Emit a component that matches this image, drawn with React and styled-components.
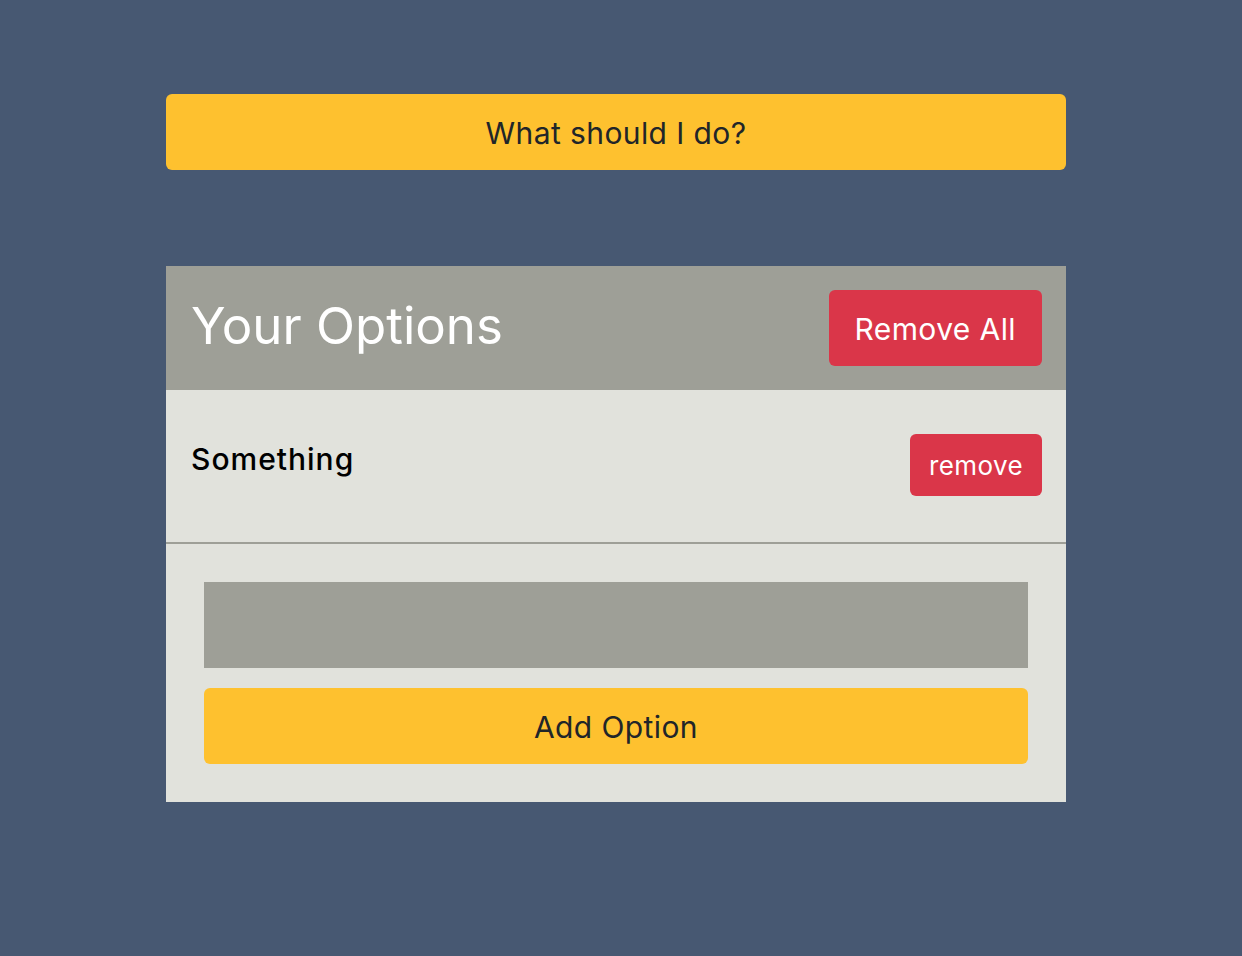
import React, { useState } from 'react';
import styled, { createGlobalStyle } from 'styled-components';

const GlobalStyle = createGlobalStyle`
  html, body {
    margin: 0;
    padding: 0;
    background: #475872;
    font-family: Inter, "Liberation Sans", sans-serif;
  }
  * {
    box-sizing: border-box;
  }
`;

const Page = styled.main`
  min-height: 956px;
  padding: 94px 10px 0 0;
`;

const Container = styled.div`
  width: 900px;
  margin: 0 auto;
`;

const Button = styled.button`
  display: block;
  border: none;
  border-radius: 6px;
  font-family: inherit;
  letter-spacing: 0.4px;
  cursor: pointer;
  padding-top: 2px;
  background: ${(props) => (props.danger ? '#da3649' : '#fec12f')};
  color: ${(props) => (props.danger ? '#ffffff' : '#212529')};
  font-size: ${(props) => props.size || 30}px;
  height: ${(props) => props.height || 76}px;
  padding-left: ${(props) => props.pad || 0}px;
  padding-right: ${(props) => props.pad || 0}px;
  width: ${(props) => (props.full ? '100%' : 'auto')};
`;

const Widget = styled.section`
  margin-top: 96px;
  background: #e1e2dc;
`;

const WidgetHeader = styled.header`
  display: flex;
  align-items: center;
  justify-content: space-between;
  height: 124px;
  padding: 0 24px 0 25px;
  background: #9e9f97;
`;

const Title = styled.h3`
  margin: 0 0 6px;
  color: #ffffff;
  font-size: 51px;
  font-weight: 400;
`;

const OptionRow = styled.div`
  display: flex;
  justify-content: space-between;
  align-items: flex-start;
  height: 154px;
  padding: 44px 24px 0 25px;
  border-bottom: 2px solid #9e9f97;
`;

const OptionText = styled.p`
  margin: 7px 0 0;
  font-size: 30px;
  font-weight: 500;
  color: #000000;
  letter-spacing: 1px;
`;

const Form = styled.form`
  display: flex;
  flex-direction: column;
  gap: 20px;
  padding: 38px;
`;

const Input = styled.input`
  height: 86px;
  border: none;
  outline: none;
  background: #9e9f97;
  padding: 0 16px;
  font-family: inherit;
  font-size: 28px;
  color: #ffffff;
`;

export default function App() {
  const [options, setOptions] = useState(['Something']);
  const [value, setValue] = useState('');

  const addOption = (e) => {
    e.preventDefault();
    if (value.trim()) {
      setOptions([...options, value.trim()]);
      setValue('');
    }
  };

  return (
    <Page>
      <GlobalStyle />
      <Container>
        <Button full>What should I do?</Button>
        <Widget>
          <WidgetHeader>
            <Title>Your Options</Title>
            <Button danger pad={26} onClick={() => setOptions([])}>
              Remove All
            </Button>
          </WidgetHeader>
          {options.map((option) => (
            <OptionRow key={option}>
              <OptionText>{option}</OptionText>
              <Button
                danger
                size={26}
                height={62}
                pad={19}
                onClick={() => setOptions(options.filter((o) => o !== option))}
              >
                remove
              </Button>
            </OptionRow>
          ))}
          <Form onSubmit={addOption}>
            <Input value={value} onChange={(e) => setValue(e.target.value)} />
            <Button full type="submit">Add Option</Button>
          </Form>
        </Widget>
      </Container>
    </Page>
  );
}
